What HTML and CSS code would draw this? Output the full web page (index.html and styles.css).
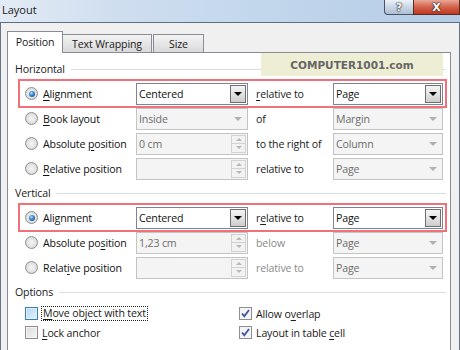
FILE: index.html
```html
<!DOCTYPE html>
<html>
<head>
<meta charset="utf-8">
<link rel="stylesheet" href="styles.css">
</head>
<body>
<div class="window">
  <div class="titlebar">
    <span class="title">Layout</span>
    <div class="caption-btns">
      <span class="cap help">?</span>
      <span class="cap close">X</span>
    </div>
  </div>
  <div class="client">
    <div class="tabs">
      <div class="tab active">Position</div>
      <div class="tab wrap">Text Wrapping</div>
      <div class="tab size">Size</div>
    </div>
    <div class="panel">
      <div class="logo">COMPUTER1001.com</div>

      <div class="group-head">Horizontal</div>
      <div class="rows">
        <div class="row hl">
          <div class="opt"><span class="radio on"></span><span><u>A</u>lignment</span></div>
          <div class="combo"><span class="val">Centered</span><span class="btn"><i class="tri"></i></span></div>
          <div class="lbl"><u>r</u>elative to</div>
          <div class="combo"><span class="val">Page</span><span class="btn"><i class="tri"></i></span></div>
        </div>
        <div class="row">
          <div class="opt"><span class="radio"></span><span><u>B</u>ook layout</span></div>
          <div class="combo dis"><span class="val">Inside</span><span class="btn"><i class="tri"></i></span></div>
          <div class="lbl">of</div>
          <div class="combo dis"><span class="val">Margin</span><span class="btn"><i class="tri"></i></span></div>
        </div>
        <div class="row">
          <div class="opt"><span class="radio"></span><span>Absolute <u>p</u>osition</span></div>
          <div class="combo dis"><span class="val">0 cm</span><span class="spin"><i class="sb"><i class="up"></i></i><i class="sb"><i class="dn"></i></i></span></div>
          <div class="lbl">to the right of</div>
          <div class="combo dis"><span class="val">Column</span><span class="btn"><i class="tri"></i></span></div>
        </div>
        <div class="row">
          <div class="opt"><span class="radio"></span><span><u>R</u>elative position</span></div>
          <div class="combo dis"><span class="val"></span><span class="spin"><i class="sb"><i class="up"></i></i><i class="sb"><i class="dn"></i></i></span></div>
          <div class="lbl">relative to</div>
          <div class="combo dis"><span class="val">Page</span><span class="btn"><i class="tri"></i></span></div>
        </div>
      </div>

      <div class="group-head">Vertical</div>
      <div class="rows">
        <div class="row hl">
          <div class="opt"><span class="radio on"></span><span>Ali<u>g</u>nment</span></div>
          <div class="combo"><span class="val">Centered</span><span class="btn"><i class="tri"></i></span></div>
          <div class="lbl">r<u>e</u>lative to</div>
          <div class="combo"><span class="val">Page</span><span class="btn"><i class="tri"></i></span></div>
        </div>
        <div class="row">
          <div class="opt"><span class="radio"></span><span>Absolute po<u>s</u>ition</span></div>
          <div class="combo dis"><span class="val">1,23 cm</span><span class="spin"><i class="sb"><i class="up"></i></i><i class="sb"><i class="dn"></i></i></span></div>
          <div class="lbl off">below</div>
          <div class="combo dis"><span class="val">Page</span><span class="btn"><i class="tri"></i></span></div>
        </div>
        <div class="row">
          <div class="opt"><span class="radio"></span><span>Relat<u>i</u>ve position</span></div>
          <div class="combo dis"><span class="val"></span><span class="spin"><i class="sb"><i class="up"></i></i><i class="sb"><i class="dn"></i></i></span></div>
          <div class="lbl off">relative to</div>
          <div class="combo dis"><span class="val">Page</span><span class="btn"><i class="tri"></i></span></div>
        </div>
      </div>

      <div class="group-head options">Options</div>
      <div class="checks">
        <div class="chk"><span class="box hover"></span><span class="focus"><u>M</u>ove object with text</span></div>
        <div class="chk"><span class="box checked"><svg viewBox="0 0 11 11" width="11" height="11"><path d="M2 5.5 L4.3 8.2 L9 2" fill="none" stroke="#3d55a0" stroke-width="1.8"/></svg></span><span>Allow o<u>v</u>erlap</span></div>
        <div class="chk"><span class="box"></span><span><u>L</u>ock anchor</span></div>
        <div class="chk"><span class="box checked"><svg viewBox="0 0 11 11" width="11" height="11"><path d="M2 5.5 L4.3 8.2 L9 2" fill="none" stroke="#3d55a0" stroke-width="1.8"/></svg></span><span>Layout in table <u>c</u>ell</span></div>
      </div>
    </div>
  </div>
</div>
</body>
</html>
```

FILE: styles.css
```css
* { box-sizing: border-box; }
html, body { margin: 0; padding: 0; }
body {
  width: 460px;
  height: 350px;
  overflow: hidden;
  font-family: "Segoe UI", "Open Sans", "Noto Sans", sans-serif;
  font-size: 10.6px;
  letter-spacing: -0.15px;
  color: #111;
  background: #f0f0f0;
}
u { text-decoration: underline; text-underline-offset: 2px; }
i { font-style: normal; }

.window { height: 350px; display: flex; flex-direction: column; }

.titlebar {
  height: 23px;
  flex: none;
  display: flex;
  align-items: flex-start;
  padding-left: 2px;
  border-bottom: 1px solid #5f6f82;
  background: linear-gradient(to right, #e3ebf5 0%, #cfdeef 25%, #c3d7ec 55%, #b4cce6 100%);
}
.title { padding-top: 2px; line-height: 15px; color: #1a1a1a; font-size: 11px; letter-spacing: 0; }
.caption-btns { margin-left: auto; display: flex; }
.cap {
  height: 15px;
  display: flex;
  align-items: center;
  justify-content: center;
  font-family: "DejaVu Sans", sans-serif;
  font-weight: bold;
  font-size: 11px;
  letter-spacing: 0;
  color: #fff;
  text-shadow: 0 0 1px #222, 0 0 1px #222, 0 0 2px #333;
  border: 1px solid #4a5566;
  border-top: none;
}
.help {
  width: 29px;
  border-right: none;
  border-radius: 0 0 0 4px;
  background: linear-gradient(#eef3f9, #c9d6e5 50%, #aebfd3);
}
.close {
  width: 47px;
  border-color: #5a2b24;
  background: linear-gradient(#e9a796, #d2624b 50%, #c0391f);
}

.client {
  flex: 1;
  display: flex;
  flex-direction: column;
  padding: 8px 8px 0 6px;
  border-left: 1px solid #66768a;
  border-right: 1px solid #66768a;
  background: #f0f0f0;
}

.tabs { display: flex; align-items: flex-end; height: 21px; flex: none; }
.tab {
  height: 18px;
  display: flex;
  align-items: center;
  justify-content: center;
  border: 1px solid #898c95;
  border-bottom: none;
  background: linear-gradient(#f3f3f3, #e6e6e6 50%, #dadada);
  color: #1a1a1a;
}
.tab.active {
  width: 56px;
  height: 22px;
  margin-bottom: -1px;
  background: #fff;
  position: relative;
  z-index: 1;
  padding-bottom: 1px;
}
.tab.wrap { width: 89px; border-left: none; }
.tab.size { width: 51px; margin-left: 1px; }

.panel {
  flex: 1;
  width: 444px;
  position: relative;
  background: #fff;
  border: 1px solid #898c95;
  border-bottom: none;
  padding: 8px 4px 0 7px;
}

.logo {
  position: absolute;
  left: 253px;
  top: 0;
  width: 182px;
  height: 23px;
  background: #eeeed4;
  display: flex;
  align-items: center;
  justify-content: center;
  font-family: "DejaVu Sans", sans-serif;
  font-weight: bold;
  font-size: 10.5px;
  letter-spacing: 0;
  color: #666;
}

.group-head {
  height: 16px;
  display: flex;
  align-items: center;
  gap: 6px;
  color: #1a1a1a;
}
.group-head::after {
  content: "";
  flex: 1;
  height: 1px;
  background: #d5dfe5;
}
.rows { margin-top: 4px; margin-bottom: 4px; }
.group-head.options { margin-top: 2px; }

.row {
  height: 25px;
  width: 425px;
  margin-left: 5px;
  padding-left: 5px;
  display: grid;
  grid-template-columns: 111px 112px 85px 110px;
  align-items: center;
}
.row.hl { outline: 2px solid #f2707a; }

.opt { display: flex; align-items: center; gap: 5px; }
.radio {
  width: 13px;
  height: 13px;
  border-radius: 50%;
  border: 1px solid #8c8e90;
  background: radial-gradient(circle at 50% 50%, #f6f6f6 0%, #e2e2e2 55%, #cfcfcf 100%);
  display: flex;
  align-items: center;
  justify-content: center;
}
.radio.on::after {
  content: "";
  width: 6px;
  height: 6px;
  border-radius: 50%;
  background: radial-gradient(circle at 40% 35%, #b6e2ff 0%, #3c8ad0 40%, #123f78 100%);
}

.lbl { padding-left: 8px; color: #1a1a1a; }
.lbl.off { color: #8a8a8a; }

.combo {
  height: 22px;
  display: flex;
  align-items: center;
  padding-left: 2px;
  border: 1px solid #7e858e;
  background: #fff;
  color: #111;
}
.combo .val { flex: 1; }
.combo .btn {
  width: 16px;
  height: 18px;
  margin-right: 1px;
  border: 1px solid #6f6f6f;
  background: linear-gradient(#f4f4f4, #e3e3e3 50%, #cdcdcd);
  display: flex;
  align-items: center;
  justify-content: center;
}
.tri {
  width: 0;
  height: 0;
  border-left: 4px solid transparent;
  border-right: 4px solid transparent;
  border-top: 4px solid #000;
}
.combo.dis {
  border-color: #c4c4c4;
  background: #f4f4f4;
  color: #6d6d6d;
}
.combo.dis .btn { border-color: transparent; background: transparent; }
.combo.dis .tri { border-top-color: #b0b0b0; }

.spin {
  width: 15px;
  height: 18px;
  margin-right: 1px;
  display: flex;
  flex-direction: column;
}
.sb {
  flex: 1;
  border: 1px solid #d2d2d2;
  background: #f2f2f2;
  display: flex;
  align-items: center;
  justify-content: center;
}
.sb + .sb { border-top: none; }
.up, .dn { width: 0; height: 0; border-left: 3px solid transparent; border-right: 3px solid transparent; }
.up { border-bottom: 3px solid #b8b8b8; }
.dn { border-top: 3px solid #b8b8b8; }

.checks {
  margin-top: 4px;
  padding-left: 10px;
  display: grid;
  grid-template-columns: 214px auto;
  grid-auto-rows: 19px;
  align-items: center;
}
.chk { display: flex; align-items: center; gap: 4px; color: #1a1a1a; }
.box {
  width: 13px;
  height: 13px;
  border: 1px solid #8e8f8f;
  background: linear-gradient(135deg, #dcdcdc, #f6f6f6);
  box-shadow: inset 0 0 0 1px #f4f4f4;
  display: flex;
  align-items: center;
  justify-content: center;
}
.box.hover {
  border-color: #3c7fb1;
  background: linear-gradient(135deg, #b1d6f2, #e6f3fc);
  box-shadow: inset 0 0 0 1px #def0fc;
}
.box.checked { background: #f4f4f4; }
.focus { outline: 1px dotted #222; padding: 0 1px; line-height: 13px; }
```
